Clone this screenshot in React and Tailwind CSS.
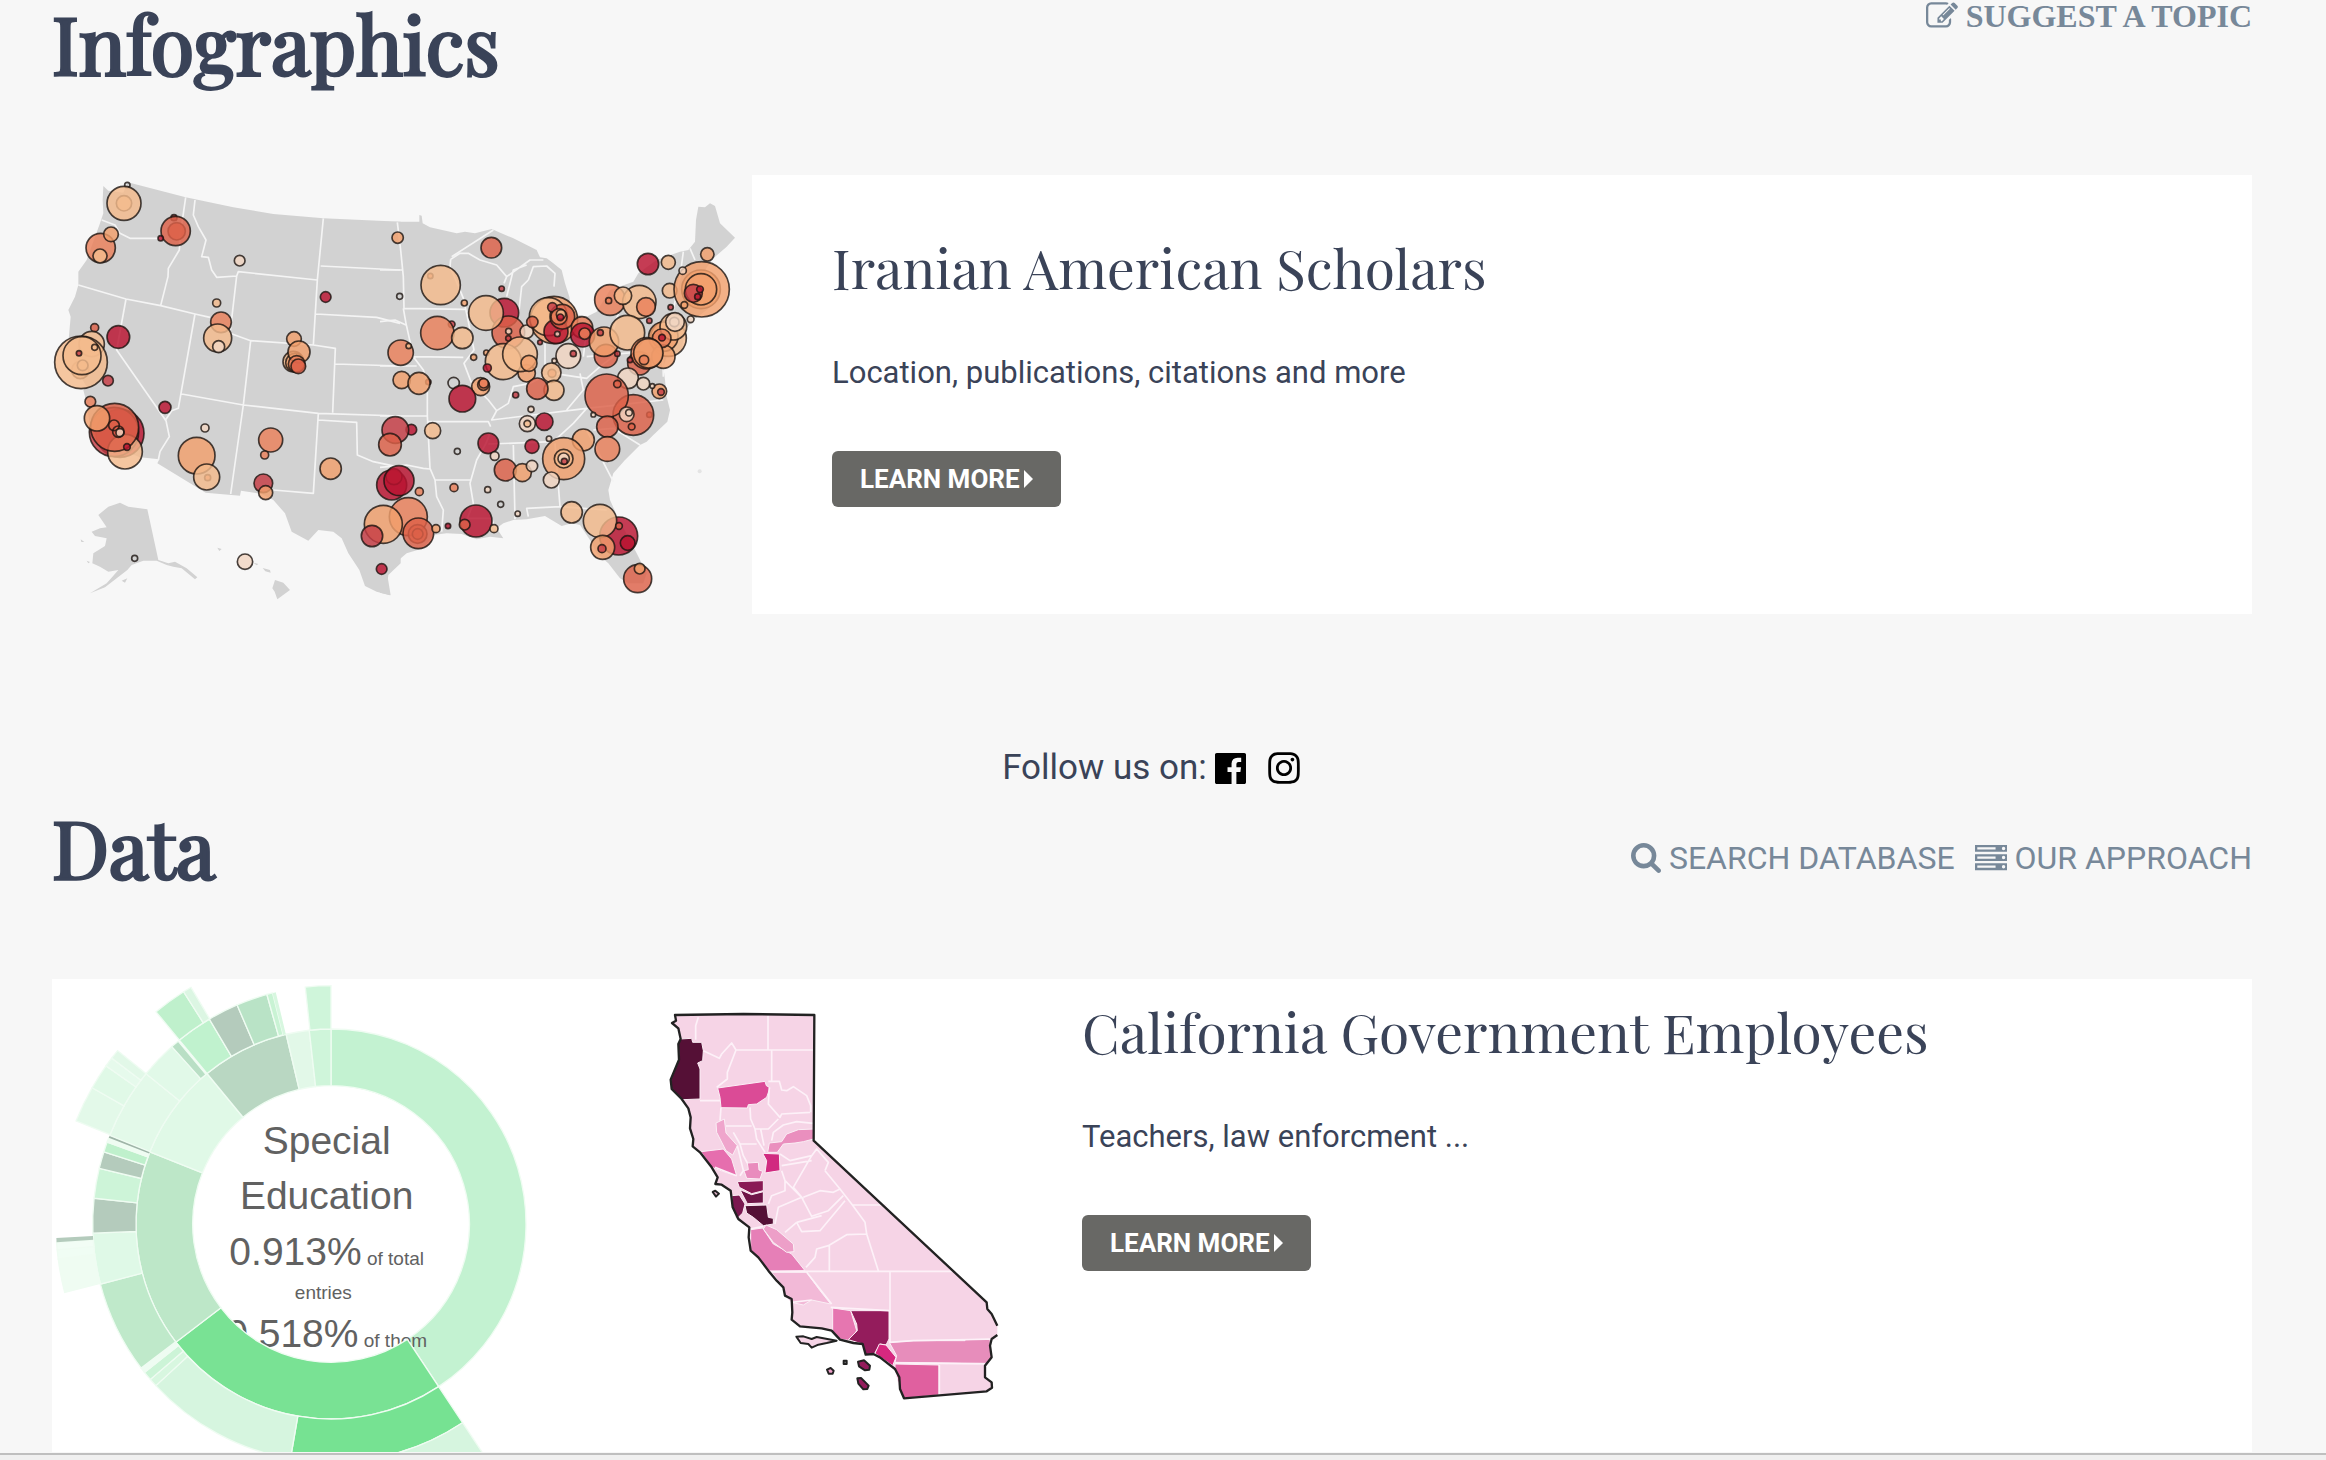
import React from "react";
import { FaInstagram } from "react-icons/fa";

// fill colours of the scholar bubbles, from few citations to many
const bubbleColors = {
  n: "none",
  w: "#f1d6c2",
  a: "#f4bb8c",
  b: "#f2a06c",
  c: "#ea805a",
  d: "#dd6048",
  e: "#c63c44",
  f: "#ba1230",
};

// [x, y, radius, color], painted in this order
const westBubbles = [
  [262, 45, 8, "n"], [252, 100, 23, "a"], [252, 100, 51, "a"],
  [402, 143, 9, "e"], [410, 184, 26, "d"], [407, 183, 44, "d"], [362, 205, 8, "f"],
  [182, 234, 44, "c"], [213, 193, 22, "b"], [180, 258, 21, "a"],
  [599, 272, 16, "w"], [530, 399, 12, "a"], [543, 457, 31, "c"],
  [533, 504, 42, "a"], [536, 530, 18, "w"], [857, 381, 16, "f"],
  [164, 473, 12, "d"], [235, 501, 34, "f"], [155, 522, 38, "a"],
  [121, 600, 26, "a"], [123, 577, 79, "a"], [128, 586, 16, "a"], [126, 557, 57, "a"],
  [164, 532, 9, "n"], [117, 550, 8, "e"], [204, 632, 16, "e"],
  [760, 575, 31, "a"], [765, 578, 28, "b"], [762, 507, 22, "b"],
  [777, 546, 33, "b"], [770, 582, 25, "c"], [775, 589, 22, "d"],
  [375, 712, 18, "f"], [151, 695, 16, "c"],
  [240, 790, 72, "f"], [222, 786, 74, "e"], [255, 845, 52, "a"],
  [224, 772, 72, "d"], [171, 745, 38, "b"], [222, 766, 16, "d"],
  [240, 788, 12, "w"], [235, 785, 17, "n"], [261, 831, 10, "f"],
  [495, 774, 12, "w"], [470, 857, 55, "b"], [503, 923, 9, "c"], [500, 921, 39, "a"],
  [692, 810, 36, "c"], [674, 855, 12, "c"], [670, 940, 28, "e"], [677, 968, 21, "b"],
  [872, 896, 32, "b"], [284, 1165, 9, "n"], [615, 1175, 23, "w"],
];

const eastBubbles = [
  [53, 203, 17, "b"], [334, 233, 31, "d"], [151, 318, 8, "c"], [182, 345, 59, "a"],
  [59, 379, 9, "n"], [253, 399, 9, "b"], [365, 356, 8, "e"],
  [215, 463, 10, "e"], [172, 489, 50, "c"], [247, 504, 32, "a"],
  [62, 548, 38, "c"], [86, 528, 8, "a"], [65, 630, 26, "b"], [145, 636, 8, "e"], [117, 640, 33, "b"],
  [373, 428, 43, "f"], [385, 487, 49, "d"], [318, 429, 52, "a"],
  [319, 548, 8, "b"], [370, 575, 54, "a"], [440, 610, 26, "b"], [420, 553, 52, "a"], [447, 580, 24, "b"],
  [322, 594, 12, "f"], [281, 562, 9, "b"], [386, 484, 9, "w"], [385, 505, 8, "e"],
  [302, 650, 27, "b"], [310, 644, 17, "c"], [311, 640, 14, "c"], [221, 639, 17, "n"], [247, 686, 40, "f"],
  [522, 450, 71, "b"], [505, 440, 57, "a"], [528, 485, 36, "f"], [440, 485, 20, "w"],
  [457, 456, 17, "d"], [547, 440, 37, "d"], [517, 412, 14, "e"], [537, 440, 24, "c"],
  [543, 433, 14, "a"], [541, 442, 10, "f"], [532, 492, 8, "w"], [480, 517, 7, "e"],
  [606, 472, 32, "c"], [608, 495, 36, "f"], [614, 491, 17, "c"],
  [565, 558, 37, "w"], [580, 551, 9, "e"], [523, 572, 7, "w"], [516, 610, 12, "c"], [514, 608, 29, "a"],
  [522, 661, 30, "a"], [472, 656, 32, "d"], [407, 675, 9, "e"], [453, 718, 9, "w"],
  [442, 761, 24, "w"], [442, 761, 10, "a"], [493, 755, 26, "f"], [456, 829, 21, "f"],
  [678, 558, 35, "d"], [712, 551, 8, "e"], [672, 515, 44, "b"], [661, 488, 9, "e"],
  [804, 282, 32, "f"], [865, 277, 21, "a"], [690, 390, 46, "c"], [686, 392, 9, "c"],
  [778, 396, 50, "a"], [798, 411, 28, "c"], [729, 377, 26, "a"], [869, 362, 22, "a"],
  [872, 412, 8, "e"], [808, 452, 8, "e"], [932, 448, 10, "w"],
  [865, 505, 54, "a"], [850, 500, 44, "b"], [880, 470, 40, "a"], [883, 456, 14, "w"], [885, 456, 28, "w"],
  [742, 488, 52, "a"], [850, 560, 35, "b"], [845, 505, 28, "c"], [846, 503, 10, "f"],
  [778, 580, 35, "d"], [800, 550, 47, "c"], [805, 550, 44, "b"], [792, 570, 14, "c"], [750, 570, 8, "e"],
  [982, 253, 20, "b"], [963, 358, 58, "b"], [965, 358, 83, "b"], [963, 358, 47, "b"],
  [940, 370, 27, "e"], [960, 358, 10, "f"], [953, 380, 9, "f"], [908, 302, 11, "w"], [913, 405, 10, "b"],
  [744, 625, 31, "w"], [790, 641, 19, "w"], [838, 664, 22, "b"], [843, 666, 10, "e"], [817, 648, 7, "w"],
  [808, 734, 8, "d"], [760, 735, 61, "d"], [680, 677, 65, "d"], [712, 642, 11, "d"], [740, 733, 22, "w"],
  [747, 728, 10, "w"], [755, 770, 10, "d"], [640, 734, 7, "w"],
  [682, 770, 32, "d"], [682, 837, 37, "c"], [610, 810, 33, "b"], [507, 806, 8, "w"],
  [551, 866, 63, "b"], [551, 866, 28, "a"], [551, 866, 17, "w"], [553, 874, 9, "e"], [514, 930, 24, "w"],
  [325, 820, 31, "f"], [344, 858, 13, "w"], [376, 900, 33, "d"], [427, 908, 27, "b"], [456, 888, 17, "w"],
  [158, 782, 24, "a"], [232, 844, 9, "n"], [94, 779, 16, "f"], [46, 780, 40, "e"], [30, 824, 34, "d"],
  [35, 945, 45, "f"], [42, 920, 24, "e"], [57, 932, 45, "f"], [118, 965, 12, "c"],
  [222, 953, 12, "c"], [323, 959, 9, "w"], [362, 1003, 9, "n"], [413, 1031, 8, "w"],
  [85, 1040, 57, "c"], [10, 1063, 57, "b"], [-24, 1098, 32, "e"], [113, 1092, 28, "d"],
  [113, 1092, 16, "d"], [115, 1090, 46, "d"], [168, 1076, 12, "b"], [204, 1068, 8, "f"],
  [288, 1053, 48, "f"], [254, 1064, 16, "d"], [342, 1076, 12, "a"], [5, 1197, 16, "f"],
  [575, 1027, 32, "a"], [716, 1098, 57, "f"], [660, 1053, 50, "a"], [717, 1068, 10, "d"],
  [743, 1119, 22, "f"], [668, 1132, 36, "b"], [666, 1136, 12, "e"],
  [773, 1226, 42, "d"], [779, 1196, 16, "b"],
];

const Bubbles = ({ data }) =>
  data.map(([x, y, r, c], i) => (
    <circle
      key={i}
      cx={x}
      cy={y}
      r={r}
      fill={bubbleColors[c]}
      fillOpacity="0.82"
      stroke="#1c1410"
      strokeOpacity="0.8"
      strokeWidth="5"
    />
  ));

const UsaMap = () => (
  <svg viewBox="36 15 2100 1317" className="block w-full" role="img" aria-label="Map of scholars">
    <g fill="#d2d2d2">
      <path d="M190 48L205 62L250 68L262 38L275 40L437 82L580 112L700 132L850 145L1082 155V1180L1045 1215L1042 1240L1050 1276L1010 1265L975 1248L958 1200L925 1150L905 1105L880 1085L835 1080L805 1112L755 1085L735 1030L700 990L665 972L603 962L600 977L497 968L352 880L358 868L300 862L270 850L200 850L185 830L150 770L140 700L130 660L140 650L110 600L85 520L92 440L85 420L105 380L115 345V305L140 270L180 160L190 130L188 90Z" />
      <path
        transform="translate(1020)"
        d="M0 155H118V135L125 137L128 160L150 172L230 190L255 185L285 190L335 177L400 205L470 240L480 262L500 265L520 280L545 300L555 340L568 380L575 430L620 440L650 425L690 360L760 335L775 310L830 270L900 245L925 240L945 215L948 150L955 110L975 112L990 100L1005 108L1020 160L1065 203L1040 230L1000 265L975 300L1000 400L980 420L940 450L915 480L905 540L860 560L850 590L855 630L860 680L870 720L862 755L820 795L800 815L780 825L735 870L700 910L685 960L690 990L710 1035L770 1150L800 1210L790 1240L745 1240L720 1225L685 1180L650 1150L630 1110L600 1065L575 1060L545 1068L495 1038L440 1048L400 1050L370 1060L350 1075L370 1105L330 1100L290 1108L245 1092L200 1090L160 1095L130 1135L80 1150L50 1175L22 1215L32 1276L0 1268Z"
      />
      {/* Alaska */}
      <path d="M175 1035L205 1010L240 998L265 1010L322 1018L355 1170L385 1180L405 1175L440 1195L472 1222L465 1228L425 1195L400 1190L380 1185L350 1172L310 1172L275 1185L262 1200L230 1225L195 1252L150 1270L200 1240L222 1215L235 1200L205 1205L180 1190L157 1180L160 1150L195 1128L200 1105L165 1098L155 1085L180 1075L200 1072Z" />
      <path d="M245 1232L262 1225L255 1238Z M122 1108L133 1116H124Z M140 1172L150 1176L145 1180Z" />
      {/* Hawaii */}
      <path d="M705 1230L730 1238L750 1260L712 1288L704 1265L697 1255Z M668 1194L690 1200L692 1208L676 1204Z M532 1133L545 1137L538 1143Z M640 1178L655 1182L650 1186Z" />
      <circle cx="1979" cy="904" r="6" opacity="0.5" />
    </g>
    <g fill="none" stroke="#f4f4f4" strokeWidth="5" strokeLinejoin="round">
      <path d="M185 150L225 165L240 190L270 205L362 205M437 82L420 200L418 240L385 295L384 320L362 407M115 345L258 387L362 407L465 432L510 442M258 387L230 540L378 752L388 800L360 845L355 870M465 432L415 715L395 722L375 752M465 90L460 135L475 170L498 210L485 260L505 262L515 300L530 322L590 318L595 305L832 330L850 145M590 318L570 490M570 490L632 512L820 525L832 330M632 512L610 705M425 672L610 705L835 730M610 705L572 972M835 730L820 970L700 960M835 750L950 757L952 855L1000 875L1080 892M842 288L1080 300M828 432L1010 442L1080 460M820 525L886 535L878 728M886 582L1080 588M835 730L1080 738" />
      <g transform="translate(1020)">
        <path d="M52 157L62 240L70 320L72 415L255 418M70 415L78 460L100 560L130 600L142 640V738M0 300H68M0 588H110M0 738H142L150 895M142 755H325L332 770M0 455L45 450L78 465M100 560L250 562M212 268L210 290L240 360L250 385L262 440L282 540L252 580L275 640L325 690L350 722L385 700L400 650L450 640L480 625L520 610M212 268L240 250H265L300 270L350 285L380 320L450 270L490 270M215 260L340 180M380 320L372 340M380 380L400 300L440 285M445 330L425 350L415 440M445 330L460 290L500 288L525 310L522 350M495 520V600M350 722L335 750L620 715L850 690M330 790L318 820L290 870L270 940L280 1000L262 1045H335L345 1075M325 822L520 815M165 930H275M150 895L165 930L170 980L190 1020L185 1085M400 825L405 1048M525 820L540 1010L440 1015L445 1040M540 1010L680 1020M520 815L580 760L620 715M620 780L700 935M640 780L700 775L780 825M520 610L620 625L660 590L700 560M560 720L610 660L600 610M620 480L610 560M620 560L850 540M715 430L700 480M880 420L900 320L910 245M930 235L945 270M848 560L850 620M0 892L80 885L130 895L150 897" />
      </g>
    </g>
    <Bubbles data={westBubbles} />
    <g transform="translate(1020)">
      <Bubbles data={eastBubbles} />
    </g>
  </svg>
);

// [inner, outer] radius of each ring
const rings = [
  [415, 585],
  [585, 715],
  [715, 825],
];
// [ring, start angle, end angle, color]
const slices = [
  [0, 146.5, 232.7, "#79e294"],
  [0, 232.7, 291.7, "#bde7c8"],
  [0, 291.7, 320.5, "#e0f9e7"],
  [0, 320.5, 346.7, "#b9d7c2"],
  [0, 346.7, 353.6, "#e2f8e8"],
  [0, 353.6, 360, "#cff5da"],
  [1, 146.5, 189.8, "#76e292"],
  [1, 189.8, 227.3, "#d6f5df"],
  [1, 227.3, 229.3, "#d8f7e0"],
  [1, 229.3, 231.5, "#ccf4d7"],
  [1, 231.5, 232.8, "#eefcf2"],
  [1, 232.8, 255.4, "#bfe9ca"],
  [1, 255.4, 267.8, "#dff9e7"],
  [1, 267.8, 276.2, "#b4cbbc"],
  [1, 276.2, 283.5, "#cdf4d8"],
  [1, 283.5, 287.6, "#b4cbbc"],
  [1, 287.6, 290.1, "#bff0cc"],
  [1, 290.1, 291.2, "#effcf2"],
  [1, 291.2, 291.8, "#9fb5a8"],
  [1, 291.8, 309.1, "#e3f9e9"],
  [1, 309.1, 318.1, "#e1f9e8"],
  [1, 318.1, 320.1, "#b9dfc5"],
  [1, 320.5, 329.3, "#c0f2ce"],
  [1, 329.3, 336.8, "#b4cbbc"],
  [1, 336.8, 344.4, "#b9e3c6"],
  [1, 344.4, 345.8, "#c9f3d4"],
  [1, 345.8, 346.6, "#d8f7e0"],
  [1, 353.8, 360, "#cff5da"],
  [2, 146.5, 175, "#d6f5df"],
  [2, 255.6, 262.7, "#effcf2"],
  [2, 262.7, 264.6, "#f0fdf4"],
  [2, 264.6, 266.2, "#f2fdf5"],
  [2, 266.2, 267.1, "#b4cbbc"],
  [2, 292, 299.7, "#e3f9e9"],
  [2, 299.7, 305.1, "#e0f9e7"],
  [2, 305.1, 307.1, "#e6faec"],
  [2, 307.1, 309.1, "#e2f8e8"],
  [2, 320.5, 327.6, "#bff0cc"],
  [2, 327.6, 329.4, "#dcf6e3"],
];

const slicePath = (ring, from, to) => {
  const [inner, outer] = rings[ring];
  const point = (r, deg) => {
    const rad = (deg * Math.PI) / 180;
    return `${873 + r * Math.sin(rad)} ${765 - r * Math.cos(rad)}`;
  };
  const large = to - from > 180 ? 1 : 0;
  return `M${point(inner, from)}L${point(outer, from)}A${outer} ${outer} 0 ${large} 1 ${point(
    outer,
    to
  )}L${point(inner, to)}A${inner} ${inner} 0 ${large} 0 ${point(inner, from)}Z`;
};

const Sunburst = () => (
  <svg
    viewBox="36 30 1500 1419"
    className="block w-[500px] shrink-0"
    role="img"
    aria-label="Share of entries by department"
  >
    <path d={slicePath(0, 0, 146.5)} fill="#c3f2d1" stroke="#effcf2" strokeWidth="4" />
    <g fill="#616161" textAnchor="middle" fontFamily="'Liberation Sans', Arial, sans-serif" fontSize="117">
      <text x="860" y="555">Special</text>
      <text x="860" y="721">Education</text>
      <text x="860" y="887">
        0.913%<tspan fontSize="57"> of total</tspan>
      </text>
      <text x="850" y="990" fontSize="57">entries</text>
      <text x="860" y="1134">
        0.518%<tspan fontSize="57"> of them</tspan>
      </text>
    </g>
    {slices.map(([ring, from, to, color]) => (
      <path
        key={`${ring}-${from}`}
        d={slicePath(ring, from, to)}
        fill={color}
        stroke="#effcf2"
        strokeWidth={to - from < 1 ? 0 : 4}
      />
    ))}
  </svg>
);

const counties = [
  ["#551036", "M120 150L155 148L158 160H185L190 185L188 215L173 222L180 240V330L128 332L95 300L92 272L117 212L115 165Z"],
  ["#db4b96", "M233 297L375 277L379 290L390 296L380 325L350 345L325 347L322 357L243 356L240 325Z"],
  ["#efa5cc", "M228 402L253 390L258 432L292 470L278 498L258 485L230 430Z"],
  ["#e66eae", "M183 488L250 480L275 510L290 560L262 552L215 535Z"],
  ["#ea8fbe", "M383 490L388 462L425 458L440 435L475 422L521 420V450L490 458L465 462L430 465L412 490Z"],
  ["#d12a80", "M368 493L418 495L420 545L375 552L380 515Z"],
  ["#e98bbd", "M322 522L355 520L357 543L368 547L360 570L320 568L312 545L325 542Z"],
  ["#8a1a55", "M292 578L370 575V605L335 614L298 595Z"],
  ["#6f1447", "M300 602L335 617L370 608V642L322 644Z"],
  ["#7a1850", "M275 620L298 618L315 645L308 672L290 690L278 655Z"],
  ["#551036", "M315 650L380 648L385 685L400 688V705L370 710L340 685L320 672Z"],
  ["#e67fb7", "M332 722L368 717L400 765L455 795L495 845L388 847L332 785Z"],
  ["#ed9fc8", "M378 708L410 722L460 765L462 788L440 790L400 760L370 720Z"],
  ["#f2b9d7", "M395 850H500L540 905L572 945L515 933L490 948L455 940L435 920L430 895Z"],
  ["#e676b0", "M578 957L632 965L650 1025L630 1055L598 1050L578 1025Z"],
  ["#941c5c", "M632 965H747V1050L738 1068L720 1065L703 1095L677 1097L668 1065L625 1052L652 1025L650 1005Z"],
  ["#d6287f", "M718 1065L738 1068L768 1105L758 1130L705 1093Z"],
  ["#e78dbb", "M748 1060L820 1055H975V1052L1050 1050L1055 1105L1040 1123L765 1120L770 1100Z"],
  ["#e0609f", "M765 1125L897 1128V1218L792 1228L780 1200L765 1140Z"],
];

const californiaCoast =
  "M1072 1038L1055 1050L1050 1070L1055 1105L1035 1130V1165L1055 1180L1056 1196L1040 1207L792 1228L780 1200L778 1165L765 1140L720 1105L700 1095L677 1097L668 1065L640 1062L600 1052L575 1025L545 1018L480 1012L455 992L457 970L455 930L435 920L430 895L410 875L385 845L355 805L332 785L326 745L328 715L295 690L278 655L272 605L245 587L226 585L233 565L215 535L180 490L158 472L160 450L150 418L152 385L145 358L125 330L95 300L92 272L117 212L115 165L122 150L115 118L96 102L108 95L105 78L310 75L523 78L521 455L1040 940L1042 960L1055 975L1072 1010";

const CaliforniaMap = () => (
  <svg
    viewBox="-264 -30 1500 1419"
    className="block w-[500px] shrink-0"
    role="img"
    aria-label="Map of California counties"
  >
    <path d={californiaCoast} fill="#f6d4e6" />
    {counties.map(([color, d]) => (
      <path key={d} d={d} fill={color} stroke="#fbeef5" strokeWidth="3" />
    ))}
    <g fill="none" stroke="#fdf1f8" strokeWidth="5" strokeLinejoin="round">
      <path d="M175 85L167 110V152M190 185L238 208L245 195L275 162L288 183H520M384 80V183M395 183V275M288 183L262 250V270L230 295M385 277H418L425 303L440 305L460 293L500 320L512 350V370M180 335H240M388 295L385 345L420 385L425 375L510 370M243 356L240 395M330 355L332 390L345 420L385 420L415 390M258 411H335M345 420L350 450L375 490M395 455L400 430L430 408L470 398L520 403M362 420L372 470M280 430L300 465H350M300 465L310 500L322 522M292 470L310 545L300 560M420 495L450 515L515 500L530 480L565 520L555 545M515 500L460 595L490 630M425 545L435 575V605L395 620L385 645M425 530L515 515M435 575L485 625L515 682L565 665L610 620M485 625L415 655L405 705M490 625L540 605L580 610L600 600L555 545M470 700L545 680M470 700L485 728L540 725L615 635M600 600L635 645L675 700L680 735L715 845M635 648H740M435 730L470 700M680 735L620 737L565 770L530 780L525 805L498 835M568 770V845M388 847H940M500 850L575 945M572 955L748 965M750 850V1060M455 940L515 933M748 1060L820 1055L1075 1050M765 1122L1040 1125M898 1128V1218M225 535L290 560M330 720L370 712" />
    </g>
    <path d={californiaCoast} fill="none" stroke="#222" strokeWidth="7" strokeLinejoin="round" />
    <g fill="#941c5c" stroke="#222" strokeWidth="6" strokeLinejoin="round">
      <path d="M654 1118L672 1114L690 1130L688 1142L675 1144L657 1132Z" />
      <path d="M652 1168L663 1167L686 1190L682 1200L670 1201L655 1184Z" />
      <path fill="#ed9fc8" d="M561 1142L572 1137L581 1145L578 1154H566Z" />
      <path fill="#888" d="M611 1115H620V1125H611Z" />
      <path fill="#ddb0c6" d="M218 609L226 605L237 614L228 623Z" />
      <path fill="#f6d4e6" d="M469 1043L490 1042L515 1050L530 1044L590 1055L560 1062L535 1067L515 1076L505 1065L482 1062Z" />
    </g>
  </svg>
);

const EditIcon = () => (
  <svg viewBox="0 0 1792 1792" className="size-8" fill="currentColor" aria-hidden="true">
    <path d="M888 1184l116-116-152-152-116 116v56h96v96h56zm440-720q-16-16-33 1l-350 350q-17 17-1 33t33-1l350-350q17-17 1-33zm80 594v190q0 119-84.5 203.5t-203.5 84.5h-832q-119 0-203.5-84.5t-84.5-203.5v-832q0-119 84.5-203.5t203.5-84.5h832q63 0 117 25 15 7 18 23 3 17-9 29l-49 49q-14 14-32 8-23-6-45-6h-832q-66 0-113 47t-47 113v832q0 66 47 113t113 47h832q66 0 113-47t47-113v-126q0-13 9-22l64-64q15-15 35-7t20 29zm-96-738l288 288-672 672h-288v-288zm444 132l-92 92-288-288 92-92q28-28 68-28t68 28l152 152q28 28 28 68t-28 68z" />
  </svg>
);

const SearchIcon = () => (
  <svg viewBox="64 128 1664 1664" className="size-[30px]" fill="currentColor" aria-hidden="true">
    <path d="M1216 832q0-185-131.5-316.5t-316.5-131.5-316.5 131.5-131.5 316.5 131.5 316.5 316.5 131.5 316.5-131.5 131.5-316.5zm512 832q0 52-38 90t-90 38q-54 0-90-38l-343-342q-179 124-399 124-143 0-273.5-55.5t-225-150-150-225-55.5-273.5 55.5-273.5 150-225 225-150 273.5-55.5 273.5 55.5 225 150 150 225 55.5 273.5q0 220-124 399l343 343q37 37 37 90z" />
  </svg>
);

const ServerIcon = () => (
  <svg viewBox="0 128 1792 1408" className="w-8" fill="currentColor" fillRule="evenodd" aria-hidden="true">
    {[128, 640, 1152].map((y) => (
      <path
        key={y}
        transform={`translate(0 ${y})`}
        d="M0 0H1792V384H0ZM128 128V256H1152V128ZM1504 192a96 96 0 1 0 192 0a96 96 0 1 0-192 0Z"
      />
    ))}
  </svg>
);

const FacebookIcon = () => (
  <svg viewBox="128 128 1536 1536" className="size-[31px]" fill="currentColor" aria-hidden="true">
    <path d="M1579 128q35 0 60 25t25 60v1366q0 35-25 60t-60 25h-391v-595h199l30-232h-229v-148q0-56 23.5-84t91.5-28l122-1v-207q-63-9-178-9-136 0-217.5 80t-81.5 226v171h-200v232h200v595h-735q-35 0-60-25t-25-60v-1366q0-35 25-60t60-25h1366z" />
  </svg>
);

const Summary = ({ title, text }) => (
  <div>
    <h2 className="font-['Playfair_Display','Liberation_Serif',serif] text-[55px] leading-[72px]">{title}</h2>
    <p className="mt-[46px] text-[31px] leading-[48px]">{text}</p>
    <button
      type="button"
      className="mt-[54px] flex h-14 items-center gap-1 rounded-md bg-[#686865] px-7 text-[26px] font-bold text-white"
    >
      LEARN MORE
      <svg viewBox="0 0 9 18" className="w-[9px]" fill="currentColor" aria-hidden="true">
        <path d="M0 0L9 9L0 18Z" />
      </svg>
    </button>
  </div>
);

const SectionTitle = ({ children }) => (
  <h1 className="font-['Playfair_Display','Liberation_Serif',serif] text-[79px] leading-[86px] [-webkit-text-stroke:3px_#3a4358]">
    {children}
  </h1>
);

function App() {
  return (
    <div className="flex h-screen flex-col overflow-hidden bg-[#f7f7f7] font-['Roboto',sans-serif] text-[#3a4358]">
      <main className="flex-1 overflow-hidden pr-[74px] pl-[52px]">
        {/* Infographics */}
        <div className="flex items-start justify-between">
          <SectionTitle>Infographics</SectionTitle>
          <a
            href="#suggest"
            className="flex items-center gap-2 font-['Liberation_Serif',serif] text-[32px] leading-8 font-bold text-[#778899]"
          >
            <EditIcon />
            SUGGEST A TOPIC
          </a>
        </div>
        <section className="mt-[89px] flex">
          <div className="w-[700px] shrink-0">
            <UsaMap />
          </div>
          <div className="flex-1 bg-white pt-14 pl-20">
            <Summary title="Iranian American Scholars" text="Location, publications, citations and more" />
          </div>
        </section>

        <div className="mt-[130px] flex items-center justify-center text-[35px] leading-[48px]">
          <span>Follow us on:</span>
          <a href="#facebook" aria-label="Facebook" className="ml-2 text-black">
            <FacebookIcon />
          </a>
          <a href="#instagram" aria-label="Instagram" className="ml-5 text-black">
            <FaInstagram size={36} />
          </a>
        </div>

        {/* Data */}
        <div className="mt-3 flex items-end justify-between">
          <SectionTitle>Data</SectionTitle>
          <div className="flex gap-5 pb-2 text-[32px] leading-[48px] text-[#778899]">
            <a href="#search" className="flex items-center gap-2">
              <SearchIcon />
              SEARCH DATABASE
            </a>
            <a href="#approach" className="flex items-center gap-2">
              <ServerIcon />
              OUR APPROACH
            </a>
          </div>
        </div>
        <section className="mt-[89px] flex bg-white">
          <Sunburst />
          <CaliforniaMap />
          <div className="flex-1 pt-4 pl-[30px]">
            <Summary title="California Government Employees" text="Teachers, law enforcment ..." />
          </div>
        </section>
      </main>
      <footer className="h-[7px] shrink-0 border-t-2 border-[#bfbfbf] bg-[#f0f0f0]" />
    </div>
  );
}

export default App;
